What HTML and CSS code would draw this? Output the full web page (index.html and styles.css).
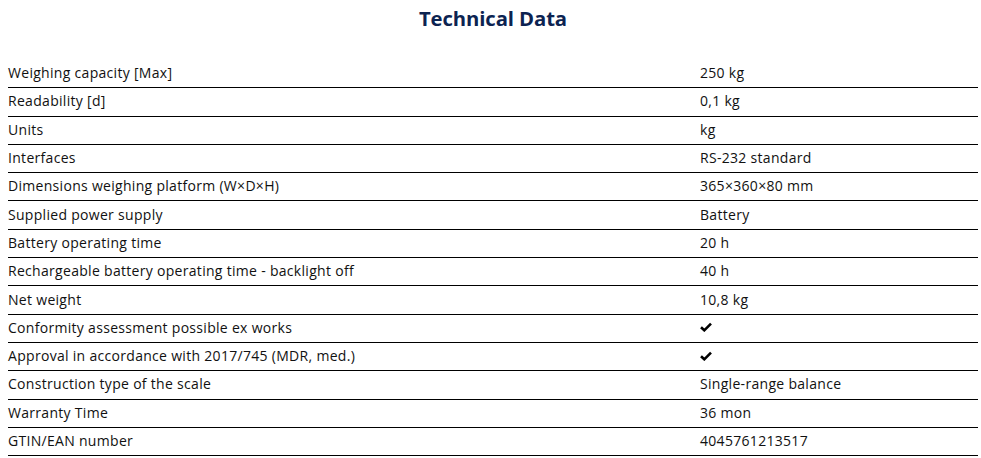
FILE: index.html
```html
<!DOCTYPE html>
<html lang="en">
<head>
<meta charset="utf-8">
<title>Technical Data</title>
<link rel="stylesheet" href="styles.css">
</head>
<body>
<section class="tech">
  <h2 class="tech-title">Technical Data</h2>
  <div class="tech-table">
    <div class="row"><div class="k">Weighing capacity [Max]</div><div class="v">250 kg</div></div>
    <div class="row"><div class="k">Readability [d]</div><div class="v">0,1 kg</div></div>
    <div class="row"><div class="k">Units</div><div class="v">kg</div></div>
    <div class="row"><div class="k">Interfaces</div><div class="v">RS-232 standard</div></div>
    <div class="row"><div class="k">Dimensions weighing platform (W×D×H)</div><div class="v">365×360×80 mm</div></div>
    <div class="row"><div class="k">Supplied power supply</div><div class="v">Battery</div></div>
    <div class="row"><div class="k">Battery operating time</div><div class="v">20 h</div></div>
    <div class="row"><div class="k">Rechargeable battery operating time - backlight off</div><div class="v">40 h</div></div>
    <div class="row"><div class="k">Net weight</div><div class="v">10,8 kg</div></div>
    <div class="row"><div class="k">Conformity assessment possible ex works</div><div class="v"><svg class="check" viewBox="0 0 12 10" width="12" height="10"><path d="M1 5.2 L4.3 8.3 L11 1.6" fill="none" stroke="#000" stroke-width="2.6" stroke-linejoin="miter"/></svg></div></div>
    <div class="row"><div class="k">Approval in accordance with 2017/745 (MDR, med.)</div><div class="v"><svg class="check" viewBox="0 0 12 10" width="12" height="10"><path d="M1 5.2 L4.3 8.3 L11 1.6" fill="none" stroke="#000" stroke-width="2.6" stroke-linejoin="miter"/></svg></div></div>
    <div class="row"><div class="k">Construction type of the scale</div><div class="v">Single-range balance</div></div>
    <div class="row"><div class="k">Warranty Time</div><div class="v">36 mon</div></div>
    <div class="row"><div class="k">GTIN/EAN number</div><div class="v">4045761213517</div></div>
  </div>
</section>
</body>
</html>
```

FILE: styles.css
```css
html, body {
  margin: 0;
  padding: 0;
  background: #fff;
}
body {
  padding: 0 3px 0 8px;
  font-family: "Open Sans", "Noto Sans", sans-serif;
  color: #111;
}
.tech-title {
  margin: 0;
  padding-top: 4px;
  height: 55px;
  box-sizing: border-box;
  text-align: center;
  font-family: "Open Sans", sans-serif;
  font-weight: 700;
  font-size: 20.3px;
  line-height: 28px;
  color: #0c2351;
  letter-spacing: -0.1px;
}
.tech-table {
  display: flex;
  flex-direction: column;
  padding-top: 5px;
}
.row {
  display: grid;
  grid-template-columns: 692px 1fr;
  height: 28.3px;
  box-sizing: border-box;
  padding-bottom: 2px;
  border-bottom: 1px solid #000;
  align-items: center;
  font-size: 14px;
  letter-spacing: 0.3px;
}
.k, .v {
  white-space: nowrap;
}
.check {
  display: block;
}
```
